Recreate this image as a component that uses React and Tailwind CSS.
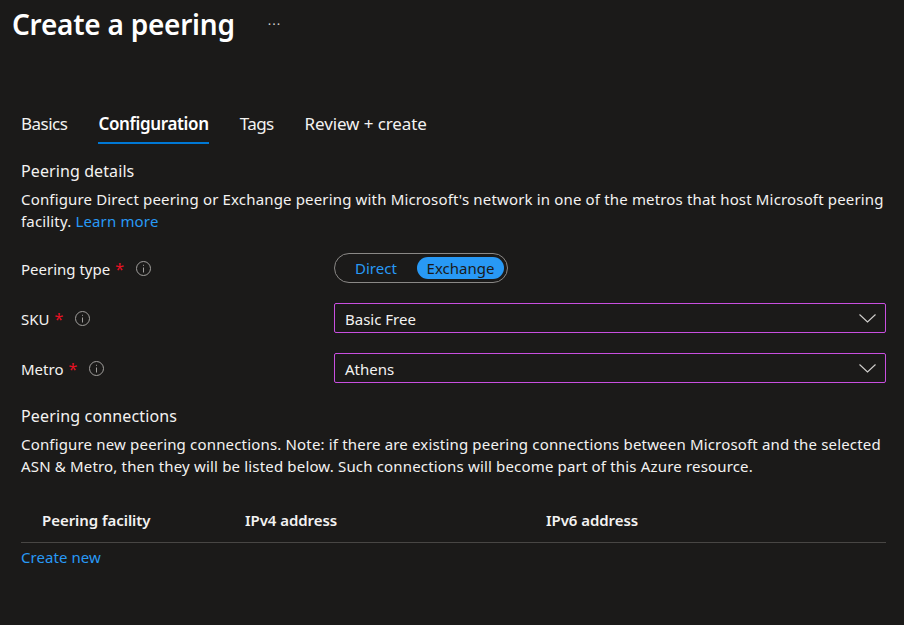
import React from 'react'

const font = { fontFamily: '"Noto Sans", sans-serif' }

const InfoIcon = () => (
  <svg width="15" height="15" viewBox="0 0 15 15" fill="none" className="shrink-0">
    <circle cx="7.5" cy="7.5" r="7" stroke="#a19f9d" strokeWidth="1" />
    <path d="M7.5 6.5v5M7.5 3.8v1" stroke="#a19f9d" strokeWidth="1" />
  </svg>
)

const Chevron = () => (
  <svg width="17" height="9" viewBox="0 0 17 9" fill="none">
    <path d="M0.5 0.5L8.5 8L16.5 0.5" stroke="#d2d0ce" strokeWidth="1.1" />
  </svg>
)

const Label = ({ text }) => (
  <div className="flex items-center w-[313px]">
    <span className="text-[15px] text-[#f3f2f1] pt-[2px]">{text}</span>
    <span className="text-[16px] text-[#e81123] ml-[5px] mr-[12px] pt-[1px]">*</span>
    <InfoIcon />
  </div>
)

const Select = ({ value }) => (
  <div className="flex-1 h-[30px] border border-[#c94fe0] rounded-[2px] flex items-center justify-between pl-[10px] pr-[9px]">
    <span className="text-[15px] text-[#f3f2f1] pt-[2px]">{value}</span>
    <Chevron />
  </div>
)

export default function App() {
  return (
    <div style={font} className="w-[904px] h-[625px] overflow-hidden bg-[#1b1a19] pl-[21px] pr-[18px]">
      {/* header */}
      <div className="flex items-center -ml-[9px] h-[48px] pb-[1px]">
        <h1 className="text-[28px] font-semibold text-white leading-[48px] tracking-[-0.25px]">Create a peering</h1>
        <span className="ml-[33px] text-[13px] text-[#d2d0ce] tracking-[1px] leading-none pt-[2px]">···</span>
      </div>

      {/* tabs */}
      <div className="flex gap-[31px] mt-[57px] text-[17px] text-[#f3f2f1] leading-[38px] h-[39px]">
        <div className="tracking-[-0.5px]">Basics</div>
        <div className="font-semibold text-white border-b-2 border-[#0078d4] tracking-[-0.35px]">Configuration</div>
        <div className="tracking-[-0.6px]">Tags</div>
        <div className="tracking-[-0.1px]">Review + create</div>
      </div>

      {/* peering details */}
      <div className="mt-[15px] text-[16px] text-[#f3f2f1] leading-[24px] tracking-[0.1px]">Peering details</div>
      <p className="mt-[5px] text-[15px] leading-[22px] text-[#f3f2f1] tracking-[0.16px]">
        Configure Direct peering or Exchange peering with Microsoft's network in one of the metros that host Microsoft peering facility. <span className="text-[#2899f5]">Learn more</span>
      </p>

      <div className="mt-[21px] flex items-center h-[30px]">
        <Label text="Peering type" />
        <div className="h-[30px] w-[174px] border border-[#8a8886] rounded-full flex items-center justify-between pl-[3px] pr-[3px] text-[15px]">
          <span className="text-[#2899f5] pl-[17px]">Direct</span>
          <span className="bg-[#2899f5] text-[#1b1a19] rounded-full h-[22px] w-[87px] flex items-center justify-center">Exchange</span>
        </div>
      </div>

      <div className="mt-[20px] flex items-center h-[30px]">
        <Label text="SKU" />
        <Select value="Basic Free" />
      </div>

      <div className="mt-[20px] flex items-center h-[30px]">
        <Label text="Metro" />
        <Select value="Athens" />
      </div>

      {/* peering connections */}
      <div className="mt-[21px] text-[16px] text-[#f3f2f1] leading-[24px] tracking-[0.15px]">Peering connections</div>
      <p className="mt-[5px] text-[15px] leading-[22px] text-[#f3f2f1] tracking-[0.17px]">
        Configure new peering connections. Note: if there are existing peering connections between Microsoft and the selected ASN &amp; Metro, then they will be listed below. Such connections will become part of this Azure resource.
      </p>

      <div className="mt-[24px] h-[42px] flex items-center border-b border-[#484644] pl-[20px] pb-[2px] text-[15px] font-semibold text-[#f3f2f1] tracking-[-0.05px]">
        <div className="w-[204px] pl-[1px]">Peering facility</div>
        <div className="w-[301px]">IPv4 address</div>
        <div>IPv6 address</div>
      </div>
      <div className="mt-[3px] text-[15px] leading-[22px] text-[#2899f5] tracking-[0.05px]">Create new</div>
    </div>
  )
}
